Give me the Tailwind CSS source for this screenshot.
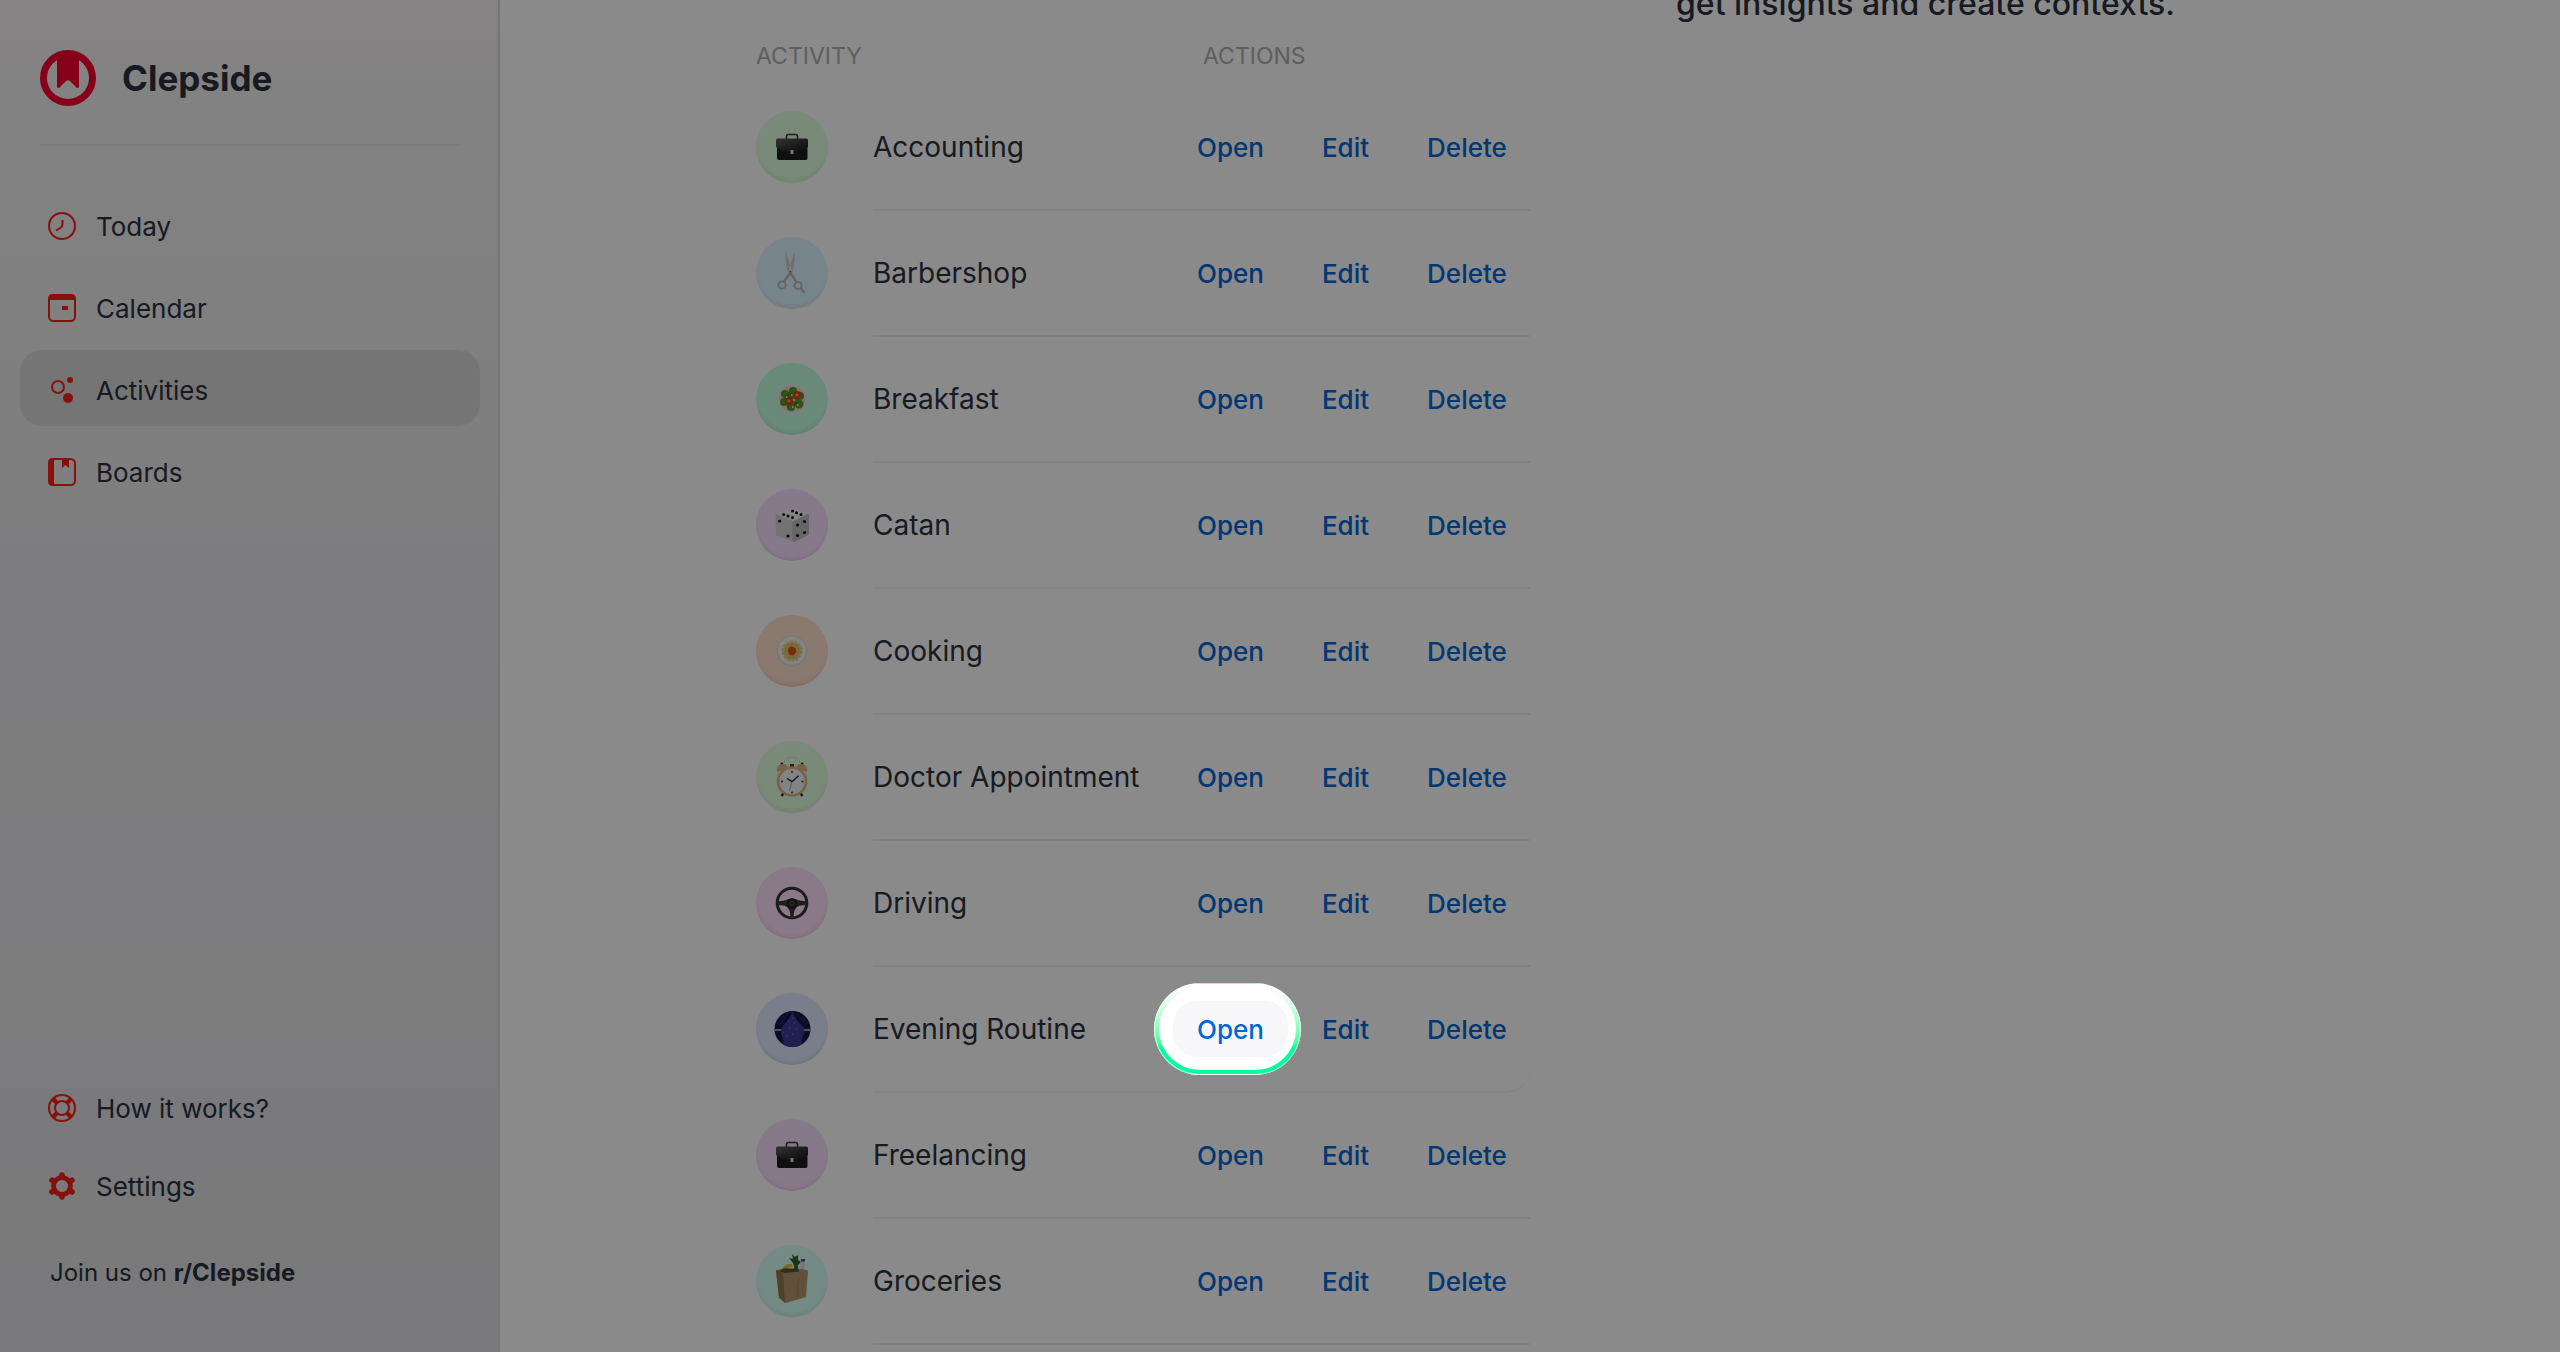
<!DOCTYPE html>
<html lang="en">
<head>
    <meta charset="UTF-8">
    <meta name="viewport" content="width=device-width, initial-scale=1.0">
    <title>Clepside - Activities</title>
    <script src="https://cdn.jsdelivr.net/npm/@tailwindcss/browser@4"></script>
</head>
<body class="bg-white font-['Inter',sans-serif] text-[#2b303d] overflow-hidden">
    <!-- Shared symbols -->
    <svg class="absolute size-0">
        <linearGradient id="leather" x1="0" y1="0" x2="1" y2="1">
            <stop offset="0" stop-color="#5c5c5e"/>
            <stop offset="1" stop-color="#161617"/>
        </linearGradient>
        <symbol id="briefcase" viewBox="0 0 72 72">
            <path d="M30.500 28v-3q0-1.500 1.500-1.500h8q1.500 0 1.500 1.500v3" fill="none" stroke="#3a3a3c" stroke-width="1.600"/>
            <rect x="21" y="29" width="30.500" height="20" rx="2" fill="#1e1e1f"/>
            <path d="M20 29q0-1.500 1.500-1.500h29q1.500 0 1.500 1.500v7q-7 5-16 5t-16-5z" fill="url(#leather)"/>
            <rect x="34.500" y="39" width="3" height="4" rx="0.500" fill="#d8d8d8"/>
        </symbol>
    </svg>

    <div class="flex h-screen">
        <!-- Sidebar -->
        <aside class="w-[500px] shrink-0 h-screen flex flex-col border-r-2 border-[#d9d9dc] bg-linear-to-b from-[#f5f2f2] via-[#e6e6e9] via-50% to-[#e0e0e3]">
            <div class="ml-10 mr-[38px] pt-[50px] pb-[38px] flex items-center gap-[26px] border-b-2 border-[#e2e2e5]">
                <svg class="size-14" viewBox="0 0 56 56">
                    <circle cx="28" cy="28" r="24.500" fill="none" stroke="#fa0030" stroke-width="7"/>
                    <path d="M17 4h22v32q0 3-2.500 1.500l-6.500-6.500q-2-1.500-4 0l-6.500 6.500q-2.500 1.500-2.500-1.500z" fill="#fa0030"/>
                </svg>
                <h1 class="text-[35px] leading-10 font-bold">Clepside</h1>
            </div>

            <nav class="mt-10 pl-5 pr-[18px] flex flex-col gap-[6px] text-[26px]">
                <a href="#today" class="h-[76px] px-7 pt-1 flex items-center gap-5 rounded-[22px]">
                    <svg class="size-7" viewBox="0 0 28 28" fill="none" stroke="#f82116" stroke-width="2">
                        <circle cx="14" cy="14" r="13"/>
                        <path d="M14.500 8v4.500q0 2-1.500 3l-5 3"/>
                    </svg>
                    Today
                </a>
                <a href="#calendar" class="h-[76px] px-7 pt-1 flex items-center gap-5 rounded-[22px]">
                    <svg class="size-7" viewBox="0 0 28 28">
                        <rect x="1" y="1" width="26" height="26" rx="4.500" fill="none" stroke="#f82116" stroke-width="2"/>
                        <path d="M0 6V5q0-5 5-5h18q5 0 5 5v1zM14 12h6v4h-6z" fill="#f82116"/>
                    </svg>
                    Calendar
                </a>
                <a href="#activities" class="h-[76px] px-7 pt-1 flex items-center gap-5 rounded-[22px] bg-[#d9d9db]">
                    <svg class="size-7" viewBox="0 0 28 28" fill="#f82116">
                        <circle cx="10" cy="11" r="6" fill="none" stroke="#f82116" stroke-width="2"/>
                        <circle cx="22" cy="4" r="3"/>
                        <circle cx="20" cy="22" r="5"/>
                    </svg>
                    Activities
                </a>
                <a href="#boards" class="h-[76px] px-7 pt-1 flex items-center gap-5 rounded-[22px]">
                    <svg class="size-7" viewBox="0 0 28 28">
                        <rect x="1" y="1" width="26" height="26" rx="4.500" fill="none" stroke="#f82116" stroke-width="2"/>
                        <path d="M6 0v28H5q-5 0-5-5V5q0-5 5-5zM14 1h7v9l-3.500-3-3.500 3z" fill="#f82116"/>
                    </svg>
                    Boards
                </a>
            </nav>

            <div class="mt-auto px-5 pb-[63px] flex flex-col text-[26px]">
                <a href="#help" class="h-[78px] px-7 flex items-center gap-5">
                    <svg class="size-7" viewBox="0 0 28 28" fill="none" stroke="#f82116" stroke-width="2">
                        <circle cx="14" cy="14" r="13"/>
                        <circle cx="14" cy="14" r="7"/>
                        <path d="M5 5l4 4M23 5l-4 4M5 23l4-4M23 23l-4-4" stroke-width="4.500"/>
                    </svg>
                    How it works?
                </a>
                <a href="#settings" class="h-[78px] px-7 flex items-center gap-5">
                    <svg class="size-7" viewBox="0 0 28 28" fill="none" stroke="#f82116">
                        <circle cx="14" cy="14" r="8.400" stroke-width="4.800"/>
                        <path d="M14 5V3M14 23v2M6.200 9.500L4 8.200M21.800 18.500l2.200 1.300M21.800 9.500L24 8.200M6.200 18.500L4 19.800" stroke-width="5.600" stroke-linecap="round"/>
                    </svg>
                    Settings
                </a>
                <p class="mt-8 px-[30px] text-2xl leading-8">Join us on <a href="#reddit" class="font-bold">r/Clepside</a></p>
            </div>
        </aside>

        <!-- Activities -->
        <main class="flex-1 px-8">
            <div class="max-w-[1548px] mx-auto flex justify-between">
                <table class="w-[774px] shrink-0 table-fixed border-separate border-spacing-0 text-left">
                    <colgroup>
                        <col class="w-[117px]">
                        <col class="w-[300px]">
                        <col>
                    </colgroup>
                    <thead>
                        <tr class="h-[85px] text-[23px] text-[#aeaeae]">
                            <th colspan="2" class="pt-7 pb-0 font-normal">ACTIVITY</th>
                            <th class="pl-[30px] pt-7 pb-0 font-normal">ACTIONS</th>
                        </tr>
                    </thead>
                    <tbody class="text-[28px]">
                        <tr class="h-[126px]">
                            <td class="border-b-2 border-transparent">
                                <div class="size-[72px] rounded-full bg-[#e0ffde] inset-shadow-[0_-4px_4px_-2px_rgba(0,60,0,0.1)]">
                                    <svg class="size-[72px]"><use href="#briefcase"/></svg>
                                </div>
                            </td>
                            <td class="border-b-2 border-[#f1f1f3]">Accounting</td>
                            <td class="border-b-2 border-[#f1f1f3]">
                                <div class="flex gap-[10px] text-[26px] font-medium text-[#0066d6]">
                                    <button class="h-14 px-6 rounded-3xl">Open</button>
                                    <button class="h-14 px-6 rounded-3xl">Edit</button>
                                    <button class="h-14 px-6 rounded-3xl">Delete</button>
                                </div>
                            </td>
                        </tr>
                        <tr class="h-[126px]">
                            <td class="border-b-2 border-transparent">
                                <div class="size-[72px] rounded-full bg-[#dcf6ff] inset-shadow-[0_-4px_4px_-2px_rgba(0,40,60,0.1)]">
                                    <svg class="size-[72px]" viewBox="0 0 72 72" fill="none" stroke="#bdb9b9">
                                        <path d="M29.500 14L36 34l-3 4q-4-10-3.500-24zM38.500 14L32.500 34l3 4q4-10 3-24z" fill="#d0cccc" stroke="none"/>
                                        <path d="M35 35l-7 9.500M34 35l6 9.500M45 51l3 5" stroke-width="2.400"/>
                                        <circle cx="26" cy="48" r="3.600" stroke-width="2"/>
                                        <circle cx="42" cy="48.500" r="3.600" stroke-width="2"/>
                                        <circle cx="34.500" cy="34.500" r="1" fill="#777" stroke="none"/>
                                    </svg>
                                </div>
                            </td>
                            <td class="border-b-2 border-[#f1f1f3]">Barbershop</td>
                            <td class="border-b-2 border-[#f1f1f3]">
                                <div class="flex gap-[10px] text-[26px] font-medium text-[#0066d6]">
                                    <button class="h-14 px-6 rounded-3xl">Open</button>
                                    <button class="h-14 px-6 rounded-3xl">Edit</button>
                                    <button class="h-14 px-6 rounded-3xl">Delete</button>
                                </div>
                            </td>
                        </tr>
                        <tr class="h-[126px]">
                            <td class="border-b-2 border-transparent">
                                <div class="size-[72px] rounded-full bg-[#c3ffe0] inset-shadow-[0_-4px_4px_-2px_rgba(0,60,30,0.1)]">
                                    <svg class="size-[72px]" viewBox="0 0 72 72">
                                        <circle cx="36" cy="36" r="15.500" fill="#e9e9e6"/>
                                        <circle cx="36" cy="36" r="13" fill="#d7dcd0"/>
                                        <g fill="#5e9628">
                                            <circle cx="36" cy="36" r="8"/>
                                            <circle cx="29" cy="31" r="4"/>
                                            <circle cx="28" cy="39" r="4"/>
                                            <circle cx="35" cy="44" r="4"/>
                                            <circle cx="43" cy="41" r="4.500"/>
                                            <circle cx="37" cy="28" r="4"/>
                                            <circle cx="44" cy="33" r="4"/>
                                        </g>
                                        <path d="M30 35l3-4M38 42l4-3M36 30l-2 3M31 43l2 1" stroke="#3d6b1a" stroke-width="1.200"/>
                                        <circle cx="33" cy="38" r="4" fill="#dc3c20"/>
                                        <circle cx="41" cy="32" r="4" fill="#dc3c20"/>
                                        <circle cx="33" cy="38" r="1.600" fill="#f59a6c"/>
                                        <circle cx="41" cy="32" r="1.600" fill="#f59a6c"/>
                                        <path d="M35 32h1.500M37 37h2M30 34h1.500M41 42h1.500M36 44h1.500" stroke="#fff" stroke-width="1.500"/>
                                    </svg>
                                </div>
                            </td>
                            <td class="border-b-2 border-[#f1f1f3]">Breakfast</td>
                            <td class="border-b-2 border-[#f1f1f3]">
                                <div class="flex gap-[10px] text-[26px] font-medium text-[#0066d6]">
                                    <button class="h-14 px-6 rounded-3xl">Open</button>
                                    <button class="h-14 px-6 rounded-3xl">Edit</button>
                                    <button class="h-14 px-6 rounded-3xl">Delete</button>
                                </div>
                            </td>
                        </tr>
                        <tr class="h-[126px]">
                            <td class="border-b-2 border-transparent">
                                <div class="size-[72px] rounded-full bg-[#f8dfff] inset-shadow-[0_-4px_4px_-2px_rgba(50,0,60,0.1)]">
                                    <svg class="size-[72px]" viewBox="0 0 72 72" stroke-linejoin="round">
                                        <path d="M36 20l16 5.500-14.500 8L20.500 26z" fill="#f2f2f2" stroke="#f2f2f2" stroke-width="2"/>
                                        <path d="M20.500 26l17 7.500V52L21 45.500z" fill="#d3d3d3" stroke="#d3d3d3" stroke-width="2"/>
                                        <path d="M52 26l-14.500 7.500V52L52 45z" fill="#bcbcbc" stroke="#bcbcbc" stroke-width="2"/>
                                        <g fill="#111">
                                            <circle cx="36.500" cy="22" r="1.500"/>
                                            <circle cx="40.500" cy="23.700" r="1.500"/>
                                            <circle cx="45" cy="25.500" r="1.500"/>
                                            <circle cx="27.700" cy="25.500" r="1.500"/>
                                            <circle cx="32" cy="27" r="1.500"/>
                                            <circle cx="36.500" cy="28.500" r="1.500"/>
                                            <circle cx="23.700" cy="32" r="1.600"/>
                                            <circle cx="32" cy="47" r="1.600"/>
                                            <circle cx="41.500" cy="36" r="1.600"/>
                                            <circle cx="48.500" cy="32.500" r="1.600"/>
                                            <circle cx="41.500" cy="46.500" r="1.600"/>
                                            <circle cx="48.500" cy="43.500" r="1.600"/>
                                        </g>
                                    </svg>
                                </div>
                            </td>
                            <td class="border-b-2 border-[#f1f1f3]">Catan</td>
                            <td class="border-b-2 border-[#f1f1f3]">
                                <div class="flex gap-[10px] text-[26px] font-medium text-[#0066d6]">
                                    <button class="h-14 px-6 rounded-3xl">Open</button>
                                    <button class="h-14 px-6 rounded-3xl">Edit</button>
                                    <button class="h-14 px-6 rounded-3xl">Delete</button>
                                </div>
                            </td>
                        </tr>
                        <tr class="h-[126px]">
                            <td class="border-b-2 border-transparent">
                                <div class="size-[72px] rounded-full bg-[#ffdfcd] inset-shadow-[0_-4px_4px_-2px_rgba(80,30,0,0.1)]">
                                    <svg class="size-[72px]" viewBox="0 0 72 72">
                                        <circle cx="36" cy="36" r="15.500" fill="#d9dadd"/>
                                        <circle cx="36" cy="35.500" r="14" fill="#f2f2f2"/>
                                        <circle cx="36" cy="36" r="9" fill="#e0c878" stroke="#e6cf86" stroke-width="3" stroke-dasharray="3 1"/>
                                        <circle cx="36" cy="36" r="7" fill="none" stroke="#c9ab52" stroke-width="1" stroke-dasharray="2 2"/>
                                        <path d="M32.500 33l3-2 4 2 1 4-3 3.500-4-.5-1.500-3z" fill="#e2501c"/>
                                    </svg>
                                </div>
                            </td>
                            <td class="border-b-2 border-[#f1f1f3]">Cooking</td>
                            <td class="border-b-2 border-[#f1f1f3]">
                                <div class="flex gap-[10px] text-[26px] font-medium text-[#0066d6]">
                                    <button class="h-14 px-6 rounded-3xl">Open</button>
                                    <button class="h-14 px-6 rounded-3xl">Edit</button>
                                    <button class="h-14 px-6 rounded-3xl">Delete</button>
                                </div>
                            </td>
                        </tr>
                        <tr class="h-[126px]">
                            <td class="border-b-2 border-transparent">
                                <div class="size-[72px] rounded-full bg-[#e0ffde] inset-shadow-[0_-4px_4px_-2px_rgba(0,60,0,0.1)]">
                                    <svg class="size-[72px]" viewBox="0 0 72 72">
                                        <path d="M28 22q1-6 8-6t8 6" fill="none" stroke="#dcd6b8" stroke-width="1"/>
                                        <path d="M25 22l2 2M47 22l-2 2M25.500 55l3-4M46.500 55l-3-4" stroke="#222" stroke-width="2.400"/>
                                        <path d="M21 31q-1-8 6-8 5 0 5 4zM51 31q1-8-6-8-5 0-5 4z" fill="#dcb17a"/>
                                        <rect x="34" y="23" width="4" height="3" fill="#333"/>
                                        <circle cx="36" cy="40.500" r="14" fill="#f2f0f4" stroke="#dfb37c" stroke-width="2.600"/>
                                        <path d="M36 30v2M36 50.500v2M25 40.500h2M45.500 40.500h2" stroke="#333" stroke-width="1.400"/>
                                        <path d="M31 37.500l5 3.200 6.500-6" fill="none" stroke="#222" stroke-width="1.400"/>
                                        <path d="M36 40.500l-2.500 9" stroke="#777" stroke-width="0.700"/>
                                    </svg>
                                </div>
                            </td>
                            <td class="border-b-2 border-[#f1f1f3] whitespace-nowrap">Doctor Appointment</td>
                            <td class="border-b-2 border-[#f1f1f3]">
                                <div class="flex gap-[10px] text-[26px] font-medium text-[#0066d6]">
                                    <button class="h-14 px-6 rounded-3xl">Open</button>
                                    <button class="h-14 px-6 rounded-3xl">Edit</button>
                                    <button class="h-14 px-6 rounded-3xl">Delete</button>
                                </div>
                            </td>
                        </tr>
                        <tr class="h-[126px]">
                            <td class="border-b-2 border-transparent">
                                <div class="size-[72px] rounded-full bg-[#ffdff9] inset-shadow-[0_-4px_4px_-2px_rgba(60,0,50,0.1)]">
                                    <svg class="size-[72px]" viewBox="0 0 72 72">
                                        <circle cx="36" cy="36" r="14.800" fill="none" stroke="#333335" stroke-width="3"/>
                                        <path d="M22 34q7 0 10-2h8q3 2 10 2v4.500q-7-1-9 1.500-3 2-3.500 10h-3q-.5-8-3.500-10-2-2.500-9-1.500z" fill="#3a3a3c"/>
                                        <circle cx="36" cy="36.500" r="5.500" fill="#232324"/>
                                        <circle cx="36" cy="36.500" r="2" fill="none" stroke="#6c6c6e" stroke-width="0.800"/>
                                    </svg>
                                </div>
                            </td>
                            <td class="border-b-2 border-[#f1f1f3]">Driving</td>
                            <td class="border-b-2 border-[#f1f1f3]">
                                <div class="flex gap-[10px] text-[26px] font-medium text-[#0066d6]">
                                    <button class="h-14 px-6 rounded-3xl">Open</button>
                                    <button class="h-14 px-6 rounded-3xl">Edit</button>
                                    <button class="h-14 px-6 rounded-3xl">Delete</button>
                                </div>
                            </td>
                        </tr>
                        <tr class="h-[126px]">
                            <td class="border-b-2 border-transparent">
                                <div class="size-[72px] rounded-full bg-[#dfe9ff] inset-shadow-[0_-4px_4px_-2px_rgba(0,10,60,0.1)]">
                                    <svg class="size-[72px]" viewBox="0 0 72 72">
                                        <circle cx="36.500" cy="36" r="18" fill="#15154a"/>
                                        <path d="M36.500 18q3 9 9 14 5 4 2 10-2 4-2 9.500-4 2.500-9 2.500t-9-2.500q0-5.500-2-9.500-2-6 2-10 6-5 9-14z" fill="#3c3a92"/>
                                        <path d="M27 23q-3 6-6 8M31 20q-3 8-8 12M46 23q3 6 6 8M42 20q3 8 8 12" fill="none" stroke="#2a2a6c" stroke-width="1"/>
                                        <path d="M19 37h6M48 37h6" stroke="#e6bfae" stroke-width="1.600"/>
                                        <path d="M32 28h1M38 30h1M33 35h1M27 39h1M40 36h1M36 41h1M30 43h1M36 25h1" stroke="#8a88d8" stroke-width="1"/>
                                    </svg>
                                </div>
                            </td>
                            <td class="border-b-2 border-[#f1f1f3]">Evening Routine</td>
                            <td class="border-b-2 border-[#f1f1f3] rounded-br-3xl">
                                <div class="flex gap-[10px] text-[26px] font-medium text-[#0066d6]">
                                    <div class="relative">
                                        <!-- Tour spotlight: dims everything around the button -->
                                        <span class="absolute z-10 -top-[18px] -bottom-[18px] -left-[19px] -right-[13px] p-1 rounded-[46px] border border-white/60 bg-linear-to-b from-white from-5% to-[#00ff9d] to-70% shadow-[0_0_0_3000px_rgba(0,0,0,0.46)] pointer-events-none">
                                            <span class="block size-full rounded-[42px] bg-white"></span>
                                        </span>
                                        <button class="relative z-20 h-14 px-6 rounded-3xl bg-[#f7f7fa]">Open</button>
                                    </div>
                                    <button class="h-14 px-6 rounded-3xl">Edit</button>
                                    <button class="h-14 px-6 rounded-3xl">Delete</button>
                                </div>
                            </td>
                        </tr>
                        <tr class="h-[126px]">
                            <td class="border-b-2 border-transparent">
                                <div class="size-[72px] rounded-full bg-[#f8dfff] inset-shadow-[0_-4px_4px_-2px_rgba(50,0,60,0.1)]">
                                    <svg class="size-[72px]"><use href="#briefcase"/></svg>
                                </div>
                            </td>
                            <td class="border-b-2 border-[#f1f1f3]">Freelancing</td>
                            <td class="border-b-2 border-[#f1f1f3]">
                                <div class="flex gap-[10px] text-[26px] font-medium text-[#0066d6]">
                                    <button class="h-14 px-6 rounded-3xl">Open</button>
                                    <button class="h-14 px-6 rounded-3xl">Edit</button>
                                    <button class="h-14 px-6 rounded-3xl">Delete</button>
                                </div>
                            </td>
                        </tr>
                        <tr class="h-[126px]">
                            <td class="border-b-2 border-transparent">
                                <div class="size-[72px] rounded-full bg-[#d6fff5] inset-shadow-[0_-4px_4px_-2px_rgba(0,60,50,0.1)]">
                                    <svg class="size-[72px]" viewBox="0 0 72 72">
                                        <path d="M25 27q2-9 11-8l1 3q-6 0-8 6z" fill="#e3bb2c"/>
                                        <path d="M38 28q1-7 -1-10l-4-5 4 1-1-5 3 3 3-2v5l3 2-3 3v8z" fill="#2f6324"/>
                                        <path d="M42 28l2-8 1-4h3l1 4-1 8z" fill="#d9d8ea"/>
                                        <path d="M45 14h4v2.500h-4z" fill="#3b4fb0"/>
                                        <path d="M20 25l6-1h20l6 1.500L50 52q-9 3-21 6l-6-5.500z" fill="#b3946a"/>
                                        <path d="M20 25l7 3 2 30-6-5.500z" fill="#92764e"/>
                                        <path d="M23 26l5-2.500h14l1 3-14 1.500z" fill="#55532f"/>
                                        <path d="M44 32q-4 10-2 20" fill="none" stroke="#a5885f" stroke-width="1.500"/>
                                    </svg>
                                </div>
                            </td>
                            <td class="border-b-2 border-[#f1f1f3]">Groceries</td>
                            <td class="border-b-2 border-[#f1f1f3]">
                                <div class="flex gap-[10px] text-[26px] font-medium text-[#0066d6]">
                                    <button class="h-14 px-6 rounded-3xl">Open</button>
                                    <button class="h-14 px-6 rounded-3xl">Edit</button>
                                    <button class="h-14 px-6 rounded-3xl">Delete</button>
                                </div>
                            </td>
                        </tr>
                    </tbody>
                </table>

                <p class="-mt-4 w-[628px] text-[32px] leading-10 font-medium">get insights and create contexts.</p>
            </div>
        </main>
    </div>
</body>
</html>
